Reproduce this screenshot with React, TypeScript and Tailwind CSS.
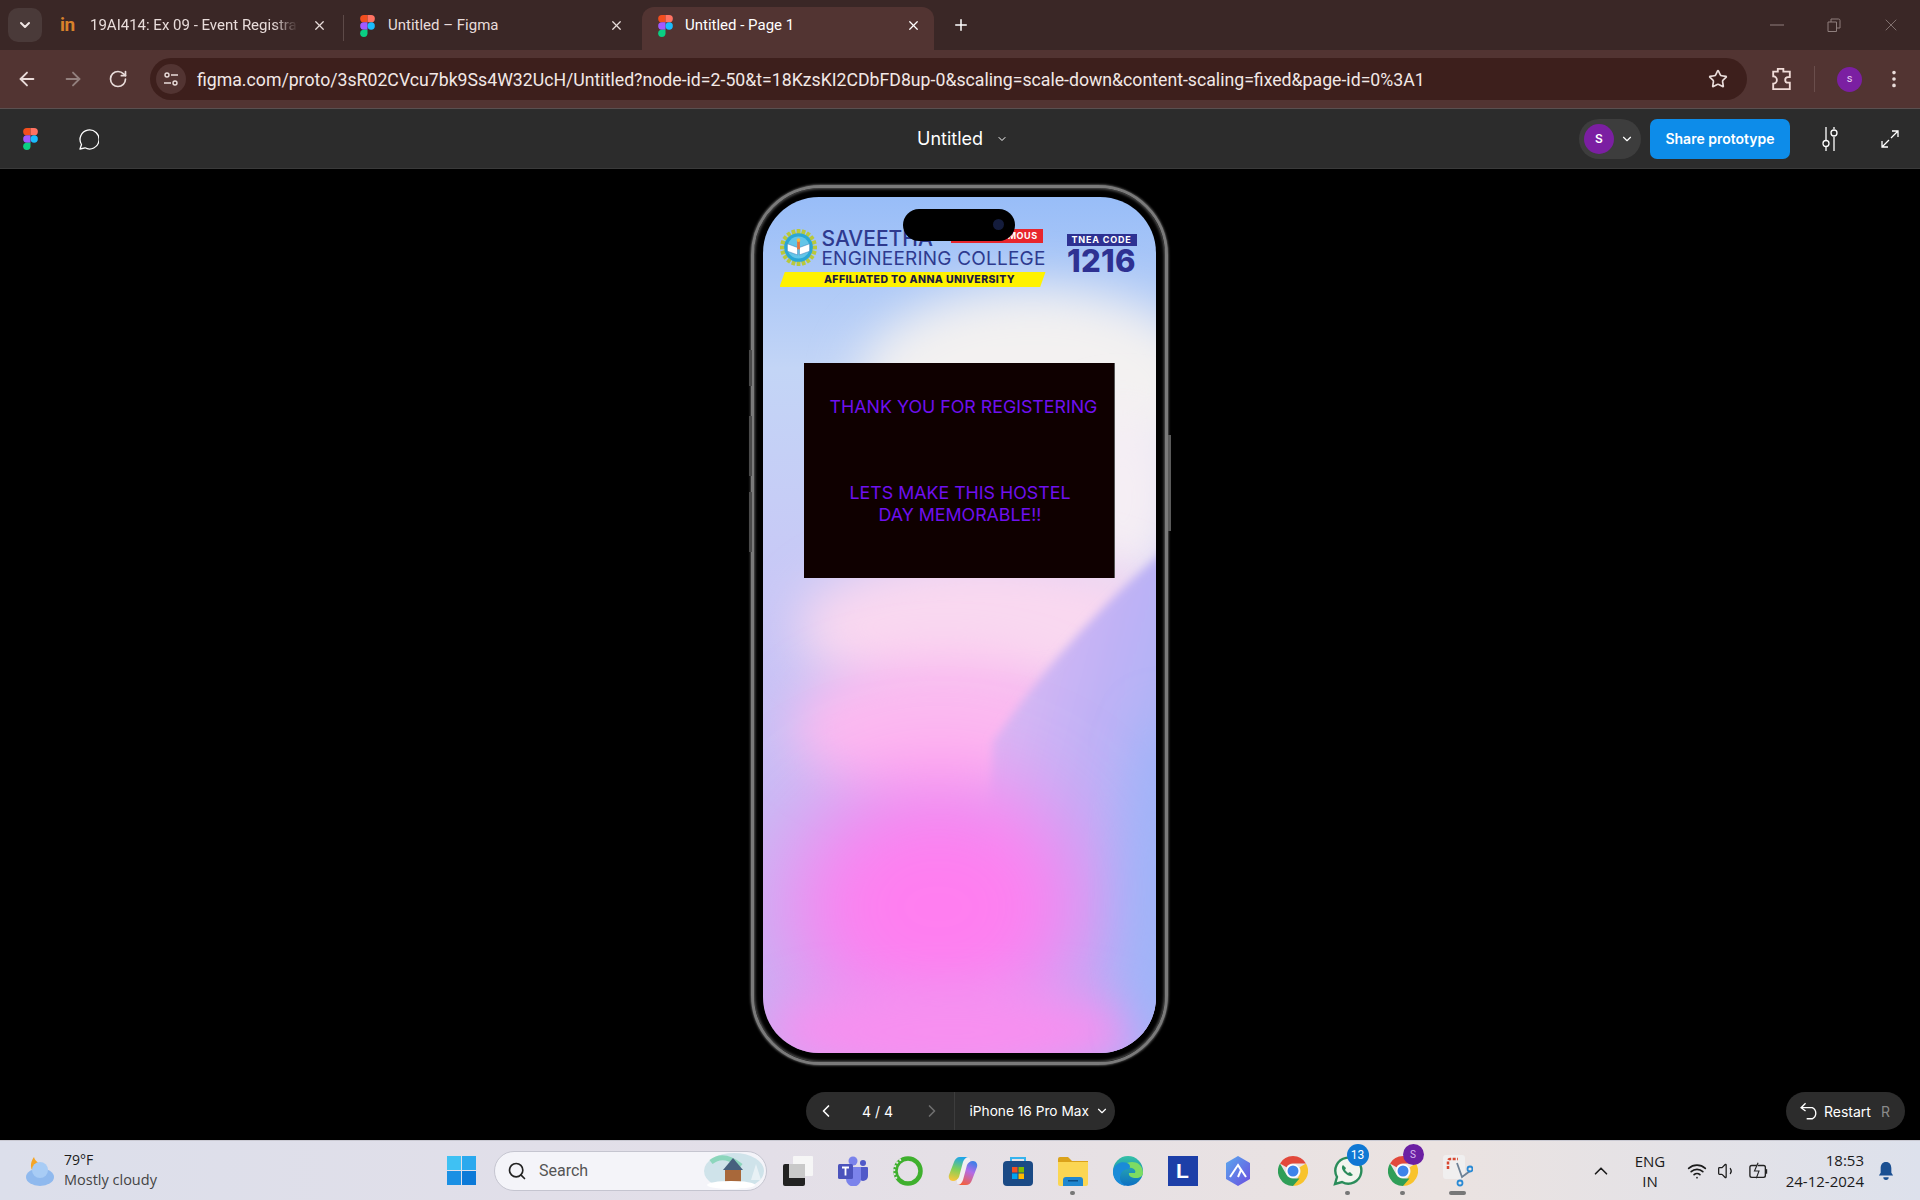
import { ArrowLeft, ArrowRight, ChevronDown, ChevronLeft, ChevronRight, ChevronUp, EllipsisVertical, Plus, RotateCw, Search, Star, Volume1, Wifi, X } from 'lucide-react'

function FigmaLogo({ className }: { className?: string }) {
  return (
    <svg viewBox="0 0 24 36" className={className}>
      <path d="M12 0H6a6 6 0 0 0 0 12h6z" fill="#f24e1e" />
      <path d="M12 0h6a6 6 0 0 1 0 12h-6z" fill="#ff7262" />
      <path d="M12 12H6a6 6 0 0 0 0 12h6z" fill="#a259ff" />
      <circle cx="18" cy="18" r="6" fill="#1abcfe" />
      <path d="M6 24h6v6a6 6 0 1 1-6-6z" fill="#0acf83" />
    </svg>
  )
}

function Emblem() {
  const teeth = Array.from({ length: 20 }, (_, i) => i * 18)
  return (
    <svg viewBox="0 0 40 40" className="w-[37px] h-[37px] shrink-0">
      {teeth.map((a) => (
        <rect key={a} x="18" y="0" width="4" height="6" fill="#b9c93a" transform={`rotate(${a} 20 20)`} />
      ))}
      <circle cx="20" cy="20" r="15.500" fill="#2aa7d6" />
      <circle cx="20" cy="20" r="12" fill="#63c5e8" />
      <path d="M8 16l11 4v8L8 24zM32 16l-11 4v8l11-4z" fill="#fff" stroke="#2a6fb0" strokeWidth="0.500" />
      <rect x="18.500" y="13" width="3" height="9" fill="#e8743b" />
      <circle cx="20" cy="12" r="2" fill="#f6b93b" />
    </svg>
  )
}

function Chrome({ className }: { className?: string }) {
  return (
    <svg viewBox="0 0 30 30" className={className}>
      <path d="M15 0a15 15 0 0 1 13 7.500H15a7.500 7.500 0 0 0-6.500 3.750L2 7.500A15 15 0 0 1 15 0z" fill="#e2483b" />
      <path d="M28 7.500A15 15 0 0 1 15 30l6.500-11.250A7.500 7.500 0 0 0 21.500 11.250z" fill="#f8c32c" />
      <path d="M15 30A15 15 0 0 1 2 7.500l6.500 11.250A7.500 7.500 0 0 0 15 22.500h6.500z" fill="#2f9e57" />
      <circle cx="15" cy="15" r="7" fill="#fff" />
      <circle cx="15" cy="15" r="5.500" fill="#3d83ea" />
    </svg>
  )
}

const taskIcons = [
  {
    key: 'taskview',
    icon: (
      <svg viewBox="0 0 30 30" className="w-[30px] h-[30px]">
        <rect x="10" y="0" width="20" height="20" rx="1" fill="#f6f6f6" />
        <rect x="0" y="8" width="22" height="22" rx="2" fill="#222" />
        <rect x="6" y="8" width="16" height="14" fill="#c9c9c9" />
      </svg>
    ),
  },
  {
    key: 'teams',
    icon: (
      <svg viewBox="0 0 30 30" className="w-[30px] h-[30px]">
        <circle cx="15" cy="5" r="4.500" fill="#7b83eb" />
        <circle cx="25" cy="7" r="3" fill="#5059c9" />
        <path d="M20 11h9a1 1 0 0 1 1 1v8a5 5 0 0 1-10 0z" fill="#5059c9" />
        <path d="M8 11h15v12a7.500 7.500 0 0 1-15 0z" fill="#7b83eb" />
        <rect x="0" y="8" width="15" height="15" rx="1.500" fill="#4b53bc" />
        <path d="M4 11.500h7M7.500 11.500v8" stroke="#fff" strokeWidth="1.800" fill="none" />
      </svg>
    ),
  },
  {
    key: 'ring',
    icon: (
      <svg viewBox="0 0 30 30" className="w-[30px] h-[30px]">
        <circle cx="15" cy="15" r="12.500" fill="none" stroke="#3fb02e" strokeWidth="4.500" />
        <path d="M8 3.500A13 13 0 0 0 4 23" fill="none" stroke="#e5e5e5" strokeWidth="2" strokeDasharray="2 2" />
      </svg>
    ),
  },
  {
    key: 'copilot',
    icon: (
      <svg viewBox="0 0 30 30" className="w-[30px] h-[30px]">
        <defs>
          <linearGradient id="copA" x1="0.500" y1="0" x2="0.300" y2="1">
            <stop offset="0" stopColor="#1fa5e8" />
            <stop offset="0.5" stopColor="#7ed05a" />
            <stop offset="1" stopColor="#f8c53a" />
          </linearGradient>
          <linearGradient id="copB" x1="0.700" y1="0" x2="0.300" y2="1">
            <stop offset="0" stopColor="#3f7fe8" />
            <stop offset="0.4" stopColor="#b26be8" />
            <stop offset="1" stopColor="#f4603a" />
          </linearGradient>
        </defs>
        <rect x="9" y="1" width="13" height="28" rx="3" fill="#f7f3f7" opacity="0.7" />
        <path d="M12 1h9c-3 0-5 2-6 5l-4 15c-1 2-3 4-6 4-3 0-5-3-4-6L6 6c1-3 3-5 6-5z" fill="url(#copA)" />
        <path d="M18 29H9c3 0 5-2 6-5l4-15c1-2 3-4 6-4 3 0 5 3 4 6l-5 13c-1 3-3 5-6 5z" fill="url(#copB)" />
      </svg>
    ),
  },
  {
    key: 'store',
    icon: (
      <svg viewBox="0 0 30 30" className="w-[30px] h-[30px]">
        <path d="M8 6V2h14v4" fill="none" stroke="#36b4ee" strokeWidth="2" />
        <rect x="0" y="5" width="30" height="25" rx="4" fill="#1b4a85" />
        <rect x="9" y="11" width="5.500" height="5.500" fill="#f25022" />
        <rect x="15.500" y="11" width="5.500" height="5.500" fill="#7fba00" />
        <rect x="9" y="17.500" width="5.500" height="5.500" fill="#00a4ef" />
        <rect x="15.500" y="17.500" width="5.500" height="5.500" fill="#ffb900" />
      </svg>
    ),
  },
  {
    key: 'folder',
    icon: (
      <svg viewBox="0 0 30 30" className="w-[30px] h-[30px]">
        <path d="M0 3a2 2 0 0 1 2-2h8l4 4h16v4H0z" fill="#dba21a" />
        <path d="M0 6h30v22a2 2 0 0 1-2 2H2a2 2 0 0 1-2-2z" fill="#fbd653" />
        <path d="M5 30v-6a3 3 0 0 1 3-3h14a3 3 0 0 1 3 3v6z" fill="#1f87d0" />
        <rect x="10" y="24" width="10" height="1.500" fill="#0b4f87" />
      </svg>
    ),
  },
  {
    key: 'edge',
    icon: (
      <svg viewBox="0 0 30 30" className="w-[30px] h-[30px]">
        <defs>
          <linearGradient id="edgeA" x1="0" y1="0" x2="0" y2="1">
            <stop offset="0" stopColor="#35c1a5" />
            <stop offset="1" stopColor="#0c6fc4" />
          </linearGradient>
        </defs>
        <circle cx="15" cy="15" r="15" fill="url(#edgeA)" />
        <path d="M30 17c0-8-6-11-11-11-6 0-11 4-12 9 3-3 8-4 12-3 3 1 4 3 3 5h-6c-1 3 3 5 7 5s7-2 7-5z" fill="#7ddc62" />
        <path d="M16 13c-6 0-9 4-9 9 0 3 2 6 6 8-7-1-13-6-13-14 0-1 0-2 .5-3C3 7 9 5 14 7c3 1 4 4 2 6z" fill="#1a8bd8" />
      </svg>
    ),
  },
  {
    key: 'l',
    icon: (
      <div className="w-[30px] h-[30px] bg-[#1d3fa8] flex items-center justify-center text-white text-[21px] font-bold font-['Liberation_Sans',sans-serif] leading-none">
        L
      </div>
    ),
  },
  {
    key: 'aurora',
    icon: (
      <svg viewBox="0 0 30 30" className="w-[30px] h-[30px]">
        <defs>
          <linearGradient id="aurA" x1="0" y1="0" x2="1" y2="1">
            <stop offset="0" stopColor="#5aa9ee" />
            <stop offset="1" stopColor="#6a4ee0" />
          </linearGradient>
        </defs>
        <path d="M15 0l12 7v16l-12 7-12-7V7z" fill="url(#aurA)" />
        <path d="M7 21l8-12 3 5-3 7M15 9l8 12" fill="none" stroke="#fff" strokeWidth="2" />
      </svg>
    ),
  },
  { key: 'chrome', icon: <Chrome className="w-[30px] h-[30px]" /> },
  {
    key: 'whatsapp',
    dot: true,
    icon: (
      <div className="relative w-[30px] h-[30px]">
        <svg viewBox="0 0 30 30" className="w-[30px] h-[30px]">
          <path d="M2 28l2-7A13 13 0 1 1 9 26z" fill="#f2f5ee" stroke="#2a8c5a" strokeWidth="2.400" />
          <path d="M10 9c-2 2-1 5 2 8s6 4 8 2l-3-3-2 1-3-3 1-2z" fill="#2a8c5a" />
        </svg>
        <span className="absolute -top-[12px] left-[14px] w-[22px] h-[22px] rounded-full bg-[#0f78d4] text-white text-[12px] flex items-center justify-center">
          13
        </span>
      </div>
    ),
  },
  {
    key: 'chrome2',
    dot: true,
    icon: (
      <div className="relative w-[30px] h-[30px]">
        <Chrome className="w-[30px] h-[30px]" />
        <span className="absolute -top-[12px] left-[15px] w-[21px] h-[21px] rounded-full bg-[#6b1fa3] text-[#d9b8ee] text-[10px] flex items-center justify-center">
          S
        </span>
      </div>
    ),
  },
  {
    key: 'snip',
    dot: true,
    wide: true,
    icon: (
      <svg viewBox="0 0 30 32" className="w-[30px] h-[32px]">
        <rect x="0" y="0" width="22" height="24" rx="3" fill="#f0efef" />
        <path d="M5 14V6a2 2 0 0 1 2-2h8" fill="none" stroke="#d8462f" strokeWidth="2.500" strokeDasharray="3 1.500" />
        <path d="M14 8l5 14 8-6" fill="none" stroke="#6f8296" strokeWidth="1.800" />
        <circle cx="27" cy="14" r="2.500" fill="none" stroke="#2a8ad4" strokeWidth="1.800" />
        <circle cx="17" cy="28" r="2.500" fill="none" stroke="#2a8ad4" strokeWidth="1.800" />
      </svg>
    ),
  },
]

function Wallpaper() {
  return (
    <svg viewBox="0 0 393 856" preserveAspectRatio="none" className="absolute inset-0 w-full h-full">
      <defs>
        <linearGradient id="base" x1="0" y1="0" x2="0" y2="1">
          <stop offset="0" stopColor="#98bdf8" />
          <stop offset="0.2" stopColor="#c3d5f6" />
          <stop offset="0.45" stopColor="#c8c8f6" />
          <stop offset="1" stopColor="#c6aef2" />
        </linearGradient>
        <linearGradient id="side" x1="0" y1="0.1" x2="0.9" y2="0.7">
          <stop offset="0" stopColor="#e6bcf2" />
          <stop offset="0.55" stopColor="#c0b2f5" />
          <stop offset="1" stopColor="#a4b4f8" />
        </linearGradient>
        <filter id="b60" x="-50%" y="-50%" width="200%" height="200%">
          <feGaussianBlur stdDeviation="48" />
        </filter>
        <filter id="b30" x="-50%" y="-50%" width="200%" height="200%">
          <feGaussianBlur stdDeviation="24" />
        </filter>
        <filter id="b3" x="-20%" y="-20%" width="140%" height="140%">
          <feGaussianBlur stdDeviation="5" />
        </filter>
      </defs>
      <rect width="393" height="856" fill="url(#base)" />
      <ellipse cx="270" cy="190" rx="175" ry="100" fill="#f3f1f1" filter="url(#b30)" />
      <ellipse cx="360" cy="300" rx="60" ry="90" fill="#f5eef4" filter="url(#b30)" />
      <ellipse cx="225" cy="430" rx="190" ry="75" fill="#f9d8f0" filter="url(#b30)" />
      <ellipse cx="180" cy="530" rx="150" ry="70" fill="#fbbcf0" filter="url(#b30)" />
      <path d="M230 545 C285 465 345 400 412 345 L420 870 L215 870 Z" fill="url(#side)" filter="url(#b3)" />
      <ellipse cx="175" cy="710" rx="150" ry="130" fill="#ff7ef0" filter="url(#b60)" />
      <ellipse cx="190" cy="835" rx="190" ry="45" fill="#f88ff0" filter="url(#b30)" />
      <ellipse cx="405" cy="690" rx="40" ry="170" fill="#a0b4f8" filter="url(#b30)" />
    </svg>
  )
}

export default function App() {
  return (
    <div className="w-[1920px] h-[1200px] overflow-hidden flex flex-col bg-black font-['Roboto',sans-serif]">
      {/* Browser tabs */}
      <div className="h-[50px] bg-[#3a2726] flex items-end relative shrink-0 text-[#e8dcda] text-[15px]">
        <div className="absolute left-[8px] top-[8px] w-[34px] h-[34px] rounded-[10px] bg-[#4a3a39] flex items-center justify-center">
          <ChevronDown size={16} strokeWidth={3} className="text-[#f0e6e4]" />
        </div>
        <div className="ml-[60px] w-[280px] h-[43px] flex items-center pb-[6px]">
          <span className="text-[#d9822b] text-[19px] font-bold w-[30px] tracking-tight">in</span>
          <span className="w-[208px] overflow-hidden whitespace-nowrap [mask-image:linear-gradient(90deg,#000_88%,transparent)]">19AI414: Ex 09 - Event Registrat</span>
          <X size={15} className="ml-[14px]" />
        </div>
        <div className="w-px h-[26px] bg-[#5d4a48] mb-[9px] ml-[3px]" />
        <div className="w-[298px] h-[43px] flex items-center pl-[16px] pb-[6px]">
          <FigmaLogo className="w-[15px] h-[22px] mr-[13px]" />
          <span>Untitled – Figma</span>
          <X size={15} className="ml-auto mr-[18px]" />
        </div>
        <div className="w-[292px] h-[43px] bg-[#523432] rounded-t-[12px] flex items-center pl-[16px] pb-[6px]">
          <FigmaLogo className="w-[15px] h-[22px] mr-[12px]" />
          <span className="text-white">Untitled - Page 1</span>
          <X size={15} className="ml-auto mr-[13px] text-white" />
        </div>
        <Plus size={18} className="ml-[18px] mb-[16px] text-white" />
        <div className="ml-auto flex items-center h-[50px] text-[#8f7f7d]">
          <svg viewBox="0 0 14 14" className="w-[14px] h-[14px] mr-[43px]">
            <path d="M0 7h14" stroke="currentColor" strokeWidth="1" />
          </svg>
          <svg viewBox="0 0 14 14" className="w-[14px] h-[14px] mr-[40px]">
            <path d="M1 4h8.500v9.500H1zM4 4V1h7.500a1.500 1.500 0 0 1 1.500 1.500V10h-3.500" fill="none" stroke="currentColor" strokeWidth="1" />
          </svg>
          <X size={20} strokeWidth={1} className="mr-[19px]" />
        </div>
      </div>

      {/* Address bar */}
      <div className="h-[59px] bg-[#523432] border-b border-[#5a5050] flex items-center shrink-0 text-[#e9dcda]">
        <ArrowLeft size={22} className="ml-[16px]" />
        <ArrowRight size={22} className="ml-[24px] text-[#93807e]" />
        <RotateCw size={20} className="ml-[24px]" />
        <div className="ml-[22px] w-[1597px] h-[42px] rounded-full bg-[#3d1f1c] flex items-center pl-[6px]">
          <div className="w-[30px] h-[30px] rounded-full bg-[#523432] flex items-center justify-center">
            <svg viewBox="0 0 16 16" className="w-[16px] h-[16px]">
              <circle cx="4" cy="4" r="2" fill="none" stroke="currentColor" strokeWidth="1.400" />
              <path d="M8 4h7M1 12h7" stroke="currentColor" strokeWidth="1.400" />
              <circle cx="12" cy="12" r="2" fill="none" stroke="currentColor" strokeWidth="1.400" />
            </svg>
          </div>
          <span className="ml-[11px] mt-[2px] text-[17.700px] whitespace-nowrap text-[#f2e8e6]">
            figma.com/proto/3sR02CVcu7bk9Ss4W32UcH/Untitled?node-id=2-50&amp;t=18KzsKI2CDbFD8up-0&amp;scaling=scale-down&amp;content-scaling=fixed&amp;page-id=0%3A1
          </span>
          <Star size={20} className="ml-auto mr-[19px]" />
        </div>
        <svg viewBox="0 0 22 26" className="ml-[24px] w-[21px] h-[24px]">
          <path d="M2 5h5V2h6v3h7v6h-2a3 3 0 0 0 0 6h2v7H2v-6a4 4 0 0 0 0-8z" fill="none" stroke="#f0dcd8" strokeWidth="2" />
        </svg>
        <div className="ml-[22px] w-px h-[26px] bg-[#6a4e4c]" />
        <div className="ml-[22px] w-[25px] h-[25px] rounded-full bg-[#7b1fa2] text-[#e4cdf0] text-[11px] flex items-center justify-center">s</div>
        <EllipsisVertical size={22} className="ml-[21px]" />
      </div>

      {/* Figma prototype bar */}
      <div className="h-[60px] bg-[#2c2c2c] border-b border-[#3a3a3a] flex items-center relative shrink-0 text-white">
        <FigmaLogo className="ml-[23px] w-[15px] h-[22px]" />
        <svg viewBox="0 0 22 22" className="ml-[39px] w-[22px] h-[22px]">
          <path d="M3 21l1.500-4.500A9.500 9.500 0 1 1 8 19.800z" fill="none" stroke="#fff" strokeWidth="1.300" strokeLinejoin="round" />
        </svg>
        <div className="absolute left-[917px] flex items-center font-['Inter',sans-serif] text-[18px]">
          Untitled
          <ChevronDown size={12} className="ml-[13px]" />
        </div>
        <div className="ml-auto w-[62px] h-[40px] rounded-full bg-[#3d3d3d] flex items-center pl-[5px]">
          <div className="w-[30px] h-[30px] rounded-full bg-[#7b1fa2] text-[12px] font-semibold font-['Inter',sans-serif] flex items-center justify-center">S</div>
          <ChevronDown size={14} className="ml-[6px]" />
        </div>
        <div className="ml-[9px] w-[140px] h-[40px] rounded-[7px] bg-[#0d8ce9] text-[14px] font-semibold font-['Inter',sans-serif] flex items-center justify-center">
          Share prototype
        </div>
        <svg viewBox="0 0 20 24" className="ml-[30px] w-[20px] h-[24px]">
          <path d="M6 0v13M6 20v4M14 0v2M14 10v14" stroke="#fff" strokeWidth="1.300" />
          <circle cx="6" cy="16.500" r="3" fill="none" stroke="#fff" strokeWidth="1.300" />
          <circle cx="14" cy="6" r="3" fill="none" stroke="#fff" strokeWidth="1.300" />
        </svg>
        <svg viewBox="0 0 20 20" className="ml-[40px] mr-[20px] w-[20px] h-[20px]">
          <path d="M12 2h6v6M18 2l-7 7M8 18H2v-6M2 18l7-7" fill="none" stroke="#fff" strokeWidth="1.300" />
        </svg>
      </div>

      {/* Canvas */}
      <div className="flex-1 bg-black flex flex-col items-center pt-[16px] relative">
        <div className="relative w-[417px] h-[880px] mr-[2px] shrink-0 rounded-[70px] border-[3px] border-[#7a7a7a] shadow-[0_0_2px_1px_#4a4a4a,inset_0_0_3px_1px_#5a5a5a] bg-black flex items-center justify-center">
          <div className="absolute left-[-5px] top-[162px] w-[3px] h-[36px] bg-[#4a4a4a]" />
          <div className="absolute left-[-5px] top-[228px] w-[3px] h-[60px] bg-[#4a4a4a]" />
          <div className="absolute left-[-5px] top-[304px] w-[3px] h-[60px] bg-[#4a4a4a]" />
          <div className="absolute right-[-6px] top-[247px] w-[3px] h-[96px] bg-[#5a5a5a]" />
          <div className="relative w-[393px] h-[856px] rounded-[56px] overflow-hidden">
            <Wallpaper />
            <div className="relative flex flex-col">
              <div className="flex pt-[32px] pl-[17px]">
                <div className="w-[266px] flex flex-col">
                  <div className="flex gap-[5px]">
                    <Emblem />
                    <div className="flex-1 flex flex-col text-[#2e3a8f] font-['Inter',sans-serif]">
                      <div className="flex justify-between h-[20px] items-start">
                        <span className="text-[21px] leading-[20px] font-medium">SAVEETHA</span>
                        <span className="bg-[#e8262d] text-white text-[9px] font-bold leading-[14px] h-[14px] w-[92px] mr-[3px] text-right pr-[5px] tracking-[0.5px]">
                          AUTONOMOUS
                        </span>
                      </div>
                      <span className="text-[19px] leading-[20px] whitespace-nowrap tracking-[0.2px]">ENGINEERING COLLEGE</span>
                    </div>
                  </div>
                  <div className="mt-[3px] h-[15px] bg-[#fff200] [clip-path:polygon(2%_0,100%_0,98%_100%,0_100%)] text-[#1a1a40] text-[10.500px] font-extrabold font-['Inter',sans-serif] leading-[15px] text-center tracking-[0.4px] pl-[14px]">
                    AFFILIATED TO ANNA UNIVERSITY
                  </div>
                </div>
                <div className="ml-[21px] mt-[5px] w-[70px] flex flex-col font-['Inter',sans-serif]">
                  <div className="h-[12px] bg-[#2e3192] text-white text-[9px] font-bold leading-[12px] text-center tracking-[0.8px]">TNEA CODE</div>
                  <div className="text-[#2e3192] text-[31px] leading-[30px] font-extrabold text-center tracking-[0.3px]">1216</div>
                </div>
              </div>
              <div className="mt-[76px] ml-[41px] w-[311px] h-[215px] bg-[#0f0000] border-r border-[#555] flex flex-col items-center text-[#6f10f0] font-['Inter',sans-serif] text-[17.800px]">
                <span className="mt-[33px] ml-[10px] leading-[22px] whitespace-nowrap">THANK YOU FOR REGISTERING</span>
                <span className="mt-[64px] ml-[3px] w-[240px] leading-[22px] text-center">LETS MAKE THIS HOSTEL DAY MEMORABLE!!</span>
              </div>
            </div>
            <div className="absolute left-[140px] top-[12px] w-[112px] h-[32px] rounded-full bg-black">
              <div className="absolute right-[11px] top-[10px] w-[11px] h-[11px] rounded-full bg-[#141c3c]" />
            </div>
          </div>
        </div>

        <div className="mt-[27px] w-[309px] h-[38px] rounded-full bg-[#2c2c2c] flex items-center text-white font-['Inter',sans-serif] text-[14px] shrink-0">
          <ChevronLeft size={20} className="ml-[10px]" />
          <span className="ml-[22px] w-[40px] text-center">4 / 4</span>
          <ChevronRight size={20} className="ml-[24px] text-[#6f6f6f]" />
          <div className="ml-[12px] h-full w-px bg-[#3d3d3d]" />
          <span className="ml-[15px] text-[13.700px] whitespace-nowrap">iPhone 16 Pro Max</span>
          <ChevronDown size={14} className="ml-[6px]" />
        </div>

        <div className="absolute right-[15px] bottom-[10px] w-[119px] h-[38px] rounded-full bg-[#2c2c2c] flex items-center text-white font-['Inter',sans-serif] text-[14px]">
          <svg viewBox="0 0 18 16" className="ml-[14px] w-[20px] h-[18px]">
            <path d="M5 1L1 5l4 3M1 5h10a5.500 5.500 0 0 1 0 10H6" fill="none" stroke="#fff" strokeWidth="1.200" />
          </svg>
          <span className="ml-[4px]">Restart</span>
          <span className="ml-[10px] text-[#8a8a8a]">R</span>
        </div>
      </div>

      {/* Windows taskbar */}
      <div className="h-[60px] shrink-0 border-t border-[#c9c9d2] bg-[linear-gradient(90deg,#dcdfeb_0%,#e3dfe8_40%,#ebe3e1_75%,#dde1ec_100%)] flex items-center relative text-[#1b1b1b]">
        <div className="w-[447px] flex items-center pl-[25px]">
          <svg viewBox="0 0 30 30" className="w-[30px] h-[30px]">
            <path d="M9 1c1 5 7 7 9 10-3 3-8 3-11 3-2-4-1-9 2-13z" fill="#f5a524" />
            <ellipse cx="15" cy="21" rx="14" ry="9" fill="#8fb9ee" />
            <circle cx="15" cy="14" r="8" fill="#a8ccf5" />
          </svg>
          <div className="ml-[9px] mb-[2px] flex flex-col font-['Open_Sans',sans-serif]">
            <span className="text-[14px] leading-[19px]">79°F</span>
            <span className="text-[14.500px] leading-[21px] text-[#444]">Mostly cloudy</span>
          </div>
        </div>
        <div className="w-[29px] h-[29px] grid grid-cols-2 grid-rows-2 gap-[1px]">
          <div className="bg-[#3fc1f3]" />
          <div className="bg-[#2ba9ee]" />
          <div className="bg-[#1a90e4]" />
          <div className="bg-[#0c7ad8]" />
        </div>
        <div className="ml-[18px] w-[273px] h-[40px] rounded-full bg-[#f4f4f9] border border-[#c5c5d0] flex items-center relative">
          <Search size={20} strokeWidth={2} className="ml-[12px] text-[#222]" />
          <span className="ml-[12px] text-[16px] text-[#555]">Search</span>
          <svg viewBox="0 0 62 38" className="absolute right-[1px] top-0 w-[62px] h-[38px]">
            <ellipse cx="31" cy="19" rx="30" ry="18" fill="#cfe3ea" />
            <path d="M8 10c10-8 20-4 30 4" stroke="#6fd0a8" strokeWidth="5" fill="none" opacity="0.7" />
            <path d="M20 18l10-12 10 12z" fill="#46607e" />
            <rect x="22" y="18" width="16" height="12" fill="#a8683a" />
            <path d="M48 28l5-16 5 16z" fill="#e8f1f5" />
            <ellipse cx="28" cy="33" rx="24" ry="4" fill="#fff" />
          </svg>
        </div>
        <div className="ml-[3px] flex">
          {taskIcons.map((t) => (
            <div key={t.key} className="relative w-[55px] h-[58px] flex items-center justify-center">
              {t.icon}
              {t.dot || t.key === 'folder' ? (
                <div className={t.wide ? 'absolute bottom-[5px] left-[19px] w-[17px] h-[4px] rounded-full bg-[#777]' : 'absolute bottom-[5px] left-[25px] w-[5px] h-[4px] rounded-full bg-[#777]'} />
              ) : null}
            </div>
          ))}
        </div>
        <div className="ml-auto flex items-center pr-[26px] text-[15px] font-['Open_Sans',sans-serif]">
          <ChevronUp size={22} strokeWidth={1.800} />
          <div className="ml-[13px] w-[50px] flex flex-col items-center leading-[20px]">
            <span>ENG</span>
            <span>IN</span>
          </div>
          <Wifi size={20} className="ml-[12px]" />
          <Volume1 size={20} strokeWidth={1.500} className="ml-[10px]" />
          <svg viewBox="0 0 22 22" className="ml-[12px] w-[20px] h-[20px]">
            <rect x="1" y="5" width="17" height="13" rx="2" fill="none" stroke="#222" strokeWidth="1.500" />
            <path d="M19 9v5" stroke="#222" strokeWidth="2" />
            <path d="M10 2L6 11h5l-3 8" fill="#dfe0ea" stroke="#222" strokeWidth="1.200" />
          </svg>
          <div className="ml-[7px] w-[88px] flex flex-col items-end leading-[21px]">
            <span>18:53</span>
            <span className="whitespace-nowrap">24-12-2024</span>
          </div>
          <svg viewBox="0 0 18 22" className="ml-[14px] w-[16px] h-[20px]">
            <path d="M9 1c4 0 6 3 6 7v5l2 3H1l2-3V8c0-4 2-7 6-7z" fill="#1a4f92" />
            <path d="M6 18a3 3 0 0 0 6 0z" fill="#1a4f92" />
          </svg>
        </div>
      </div>
    </div>
  )
}
